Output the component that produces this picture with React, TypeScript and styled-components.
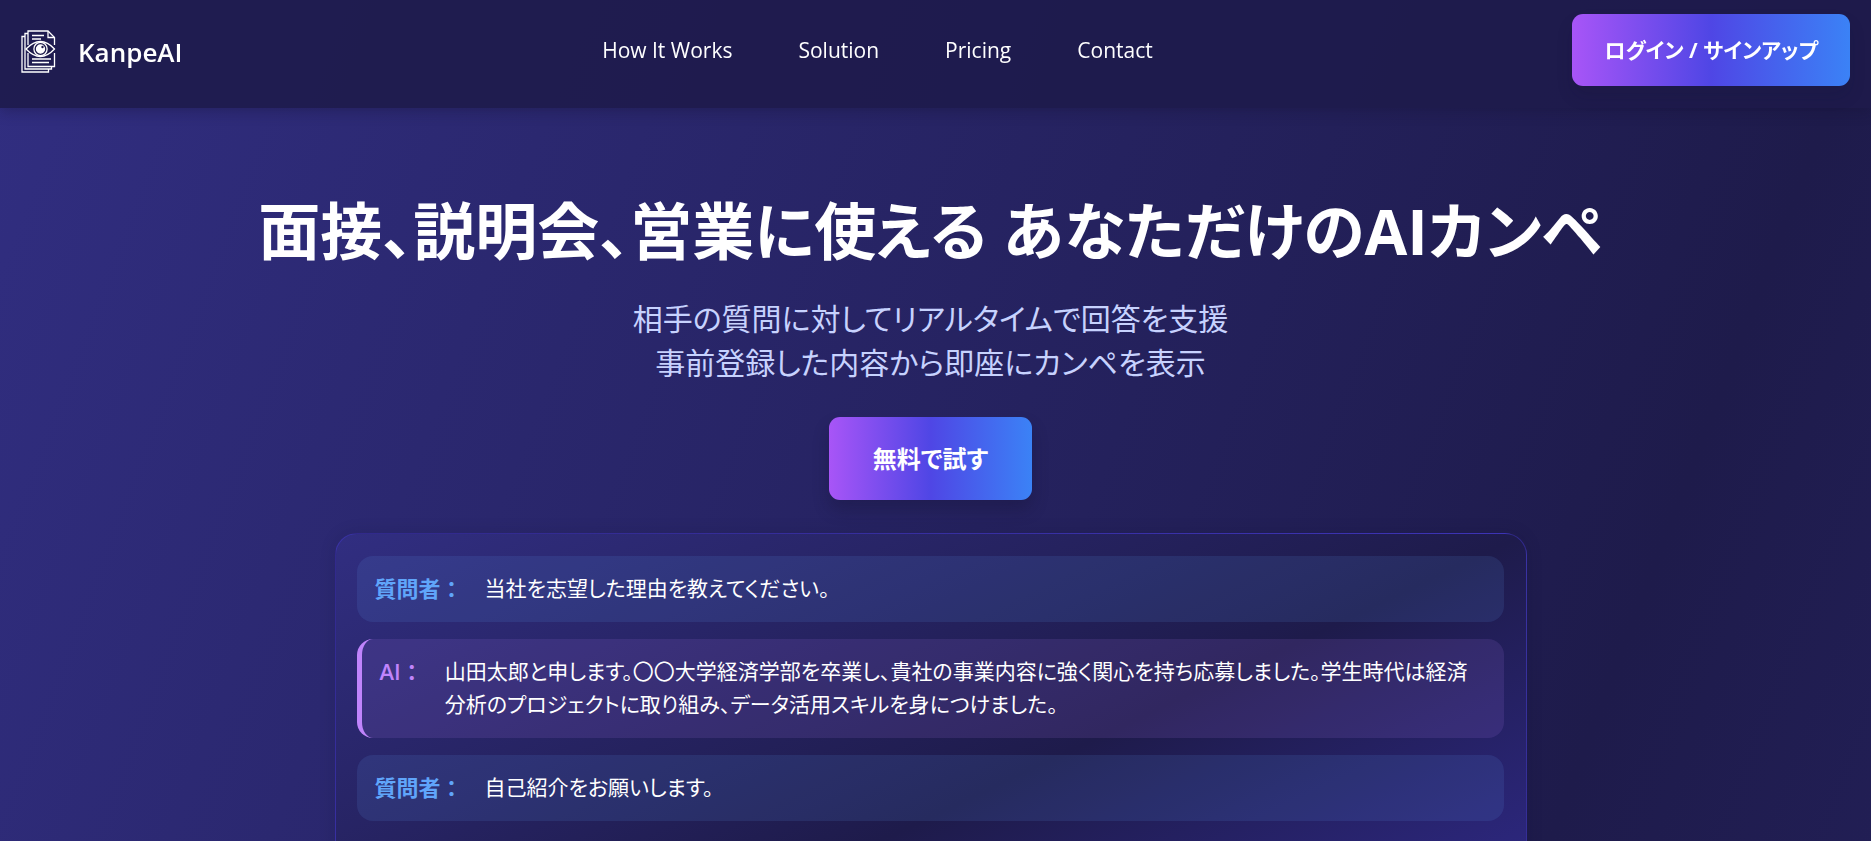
import React from "react";
import styled, { createGlobalStyle } from "styled-components";

const GlobalStyle = createGlobalStyle`
  *, *::before, *::after { box-sizing: border-box; }
  body {
    margin: 0;
    background: #1e1b4b;
    color: #fff;
    font-family: "Open Sans", "Noto Sans CJK JP", sans-serif;
    font-feature-settings: "palt";
  }
`;

const Page = styled.div`
  height: 100vh;
  overflow-y: auto;
  scrollbar-width: none;
`;

const Surface = styled.div`
  background: linear-gradient(to bottom right, #312e81, #1e1b4b, #312e81) 0 0 / 100% 4900px no-repeat;
`;

const Header = styled.header`
  position: sticky;
  top: 0;
  z-index: 1;
  display: flex;
  justify-content: space-between;
  align-items: center;
  height: 108px;
  padding: 0 21px 8px;
  background: rgba(30, 27, 75, 0.9);
  box-shadow: 0 4px 12px rgba(20, 18, 50, 0.3);
`;

const Brand = styled.a`
  display: flex;
  align-items: center;
  gap: 22px;
  padding-top: 3px;
  color: #fff;
  font-size: 26px;
  font-weight: 600;
  line-height: 36px;
  text-decoration: none;
`;

const Nav = styled.nav`
  display: flex;
  gap: 66px;
`;

const NavLink = styled.a`
  color: #fff;
  font-size: 21px;
  font-weight: 500;
  line-height: 32px;
  text-decoration: none;
`;

const GradientButton = styled.button<{ $size: "header" | "hero" }>`
  height: ${(p) => (p.$size === "hero" ? 83 : 72)}px;
  padding: 0 ${(p) => (p.$size === "hero" ? 44 : 32)}px 2px;
  border: 0;
  border-radius: 11px;
  background: linear-gradient(to right, #a855f7, #4f46e5, #3b82f6);
  box-shadow: 0 10px 16px rgba(20, 18, 50, ${(p) => (p.$size === "hero" ? 0.3 : 0.15)});
  color: #fff;
  font: inherit;
  font-size: ${(p) => (p.$size === "hero" ? 24 : 21)}px;
  font-weight: 700;
  cursor: pointer;
`;

const Hero = styled.main`
  display: flex;
  flex-direction: column;
  align-items: center;
  padding: 77px 32px 64px 22px;
  text-align: center;
`;

const Title = styled.h1`
  margin: 0;
  font-size: 62px;
  font-weight: 700;
  line-height: 92px;
`;

const Lead = styled.p`
  margin: 20px 0 32px;
  color: #c7d2fe;
  font-size: 30px;
  font-weight: 400;
  line-height: 44px;
`;

const Chat = styled.section`
  display: flex;
  flex-direction: column;
  gap: 17px;
  width: 100%;
  max-width: 1192px;
  min-height: 568px;
  margin-top: 33px;
  padding: 22px 22px 22px 21px;
  border: 1px solid rgba(67, 56, 202, 0.5);
  border-radius: 22px;
  background: linear-gradient(to bottom right, #312e81, #1e1b4b, #3730a3);
  box-shadow: 0 0 16px rgba(20, 18, 50, 0.15);
  text-align: left;
`;

const Message = styled.div<{ $ai?: boolean }>`
  display: flex;
  gap: 22px;
  padding: 16px 18px 17px;
  border-left: ${(p) => (p.$ai ? "5px solid #c084fc" : "0")};
  border-radius: 16px;
  background: ${(p) => (p.$ai ? "rgba(192, 132, 252, 0.12)" : "rgba(96, 165, 250, 0.12)")};
  font-size: 21px;
  line-height: 33px;
`;

const Speaker = styled.span<{ $ai?: boolean }>`
  flex: none;
  color: ${(p) => (p.$ai ? "#c084fc" : "#60a5fa")};
  font-size: 22px;
  font-weight: ${(p) => (p.$ai ? 600 : 700)};
  font-feature-settings: normal;
`;

const messages = [
  { ai: false, text: "当社を志望した理由を教えてください。" },
  {
    ai: true,
    text: "山田太郎と申します。〇〇大学経済学部を卒業し、貴社の事業内容に強く関心を持ち応募しました。学生時代は経済分析のプロジェクトに取り組み、データ活用スキルを身につけました。",
  },
  { ai: false, text: "自己紹介をお願いします。" },
];

const Logo = () => (
  <svg width="35" height="43" viewBox="0 0 35 43" fill="none" stroke="#fff" strokeWidth="1.3" aria-hidden="true">
    <path d="M4 6.5H1V42h26.500v-3" />
    <path d="M7 3.500H4V39h26.500v-3" />
    <path d="M7 15V1h20l6.500 6.500V15M33.500 23v13.500H7V23" />
    <path d="M27 1v6.500h6.500M11 5.500h12M11 9h9M11 29h19M11 32.500h17" />
    <path d="M5 19Q19.500 4 33.500 19Q19.500 34 5 19Z" fill="#1e1b4b" />
    <circle cx="19.500" cy="19" r="6.600" />
    <circle cx="19.500" cy="19" r="4" fill="#fff" />
    <circle cx="21.500" cy="17" r="1.200" fill="#1e1b4b" stroke="none" />
  </svg>
);

export default function App() {
  return (
    <Page>
      <GlobalStyle />
      <Surface>
        <Header>
          <Brand href="#">
            <Logo />
            KanpeAI
          </Brand>
          <Nav>
            <NavLink href="#how">How It Works</NavLink>
            <NavLink href="#solution">Solution</NavLink>
            <NavLink href="#pricing">Pricing</NavLink>
            <NavLink href="#contact">Contact</NavLink>
          </Nav>
          <GradientButton $size="header">ログイン / サインアップ</GradientButton>
        </Header>
        <Hero>
          <Title>面接、説明会、営業に使える あなただけのAIカンペ</Title>
          <Lead>
            相手の質問に対してリアルタイムで回答を支援
            <br />
            事前登録した内容から即座にカンペを表示
          </Lead>
          <GradientButton $size="hero">無料で試す</GradientButton>
          <Chat>
            {messages.map((m) => (
              <Message key={m.text} $ai={m.ai}>
                <Speaker $ai={m.ai}>{m.ai ? "AI：" : "質問者："}</Speaker>
                <span>{m.text}</span>
              </Message>
            ))}
          </Chat>
        </Hero>
      </Surface>
    </Page>
  );
}
